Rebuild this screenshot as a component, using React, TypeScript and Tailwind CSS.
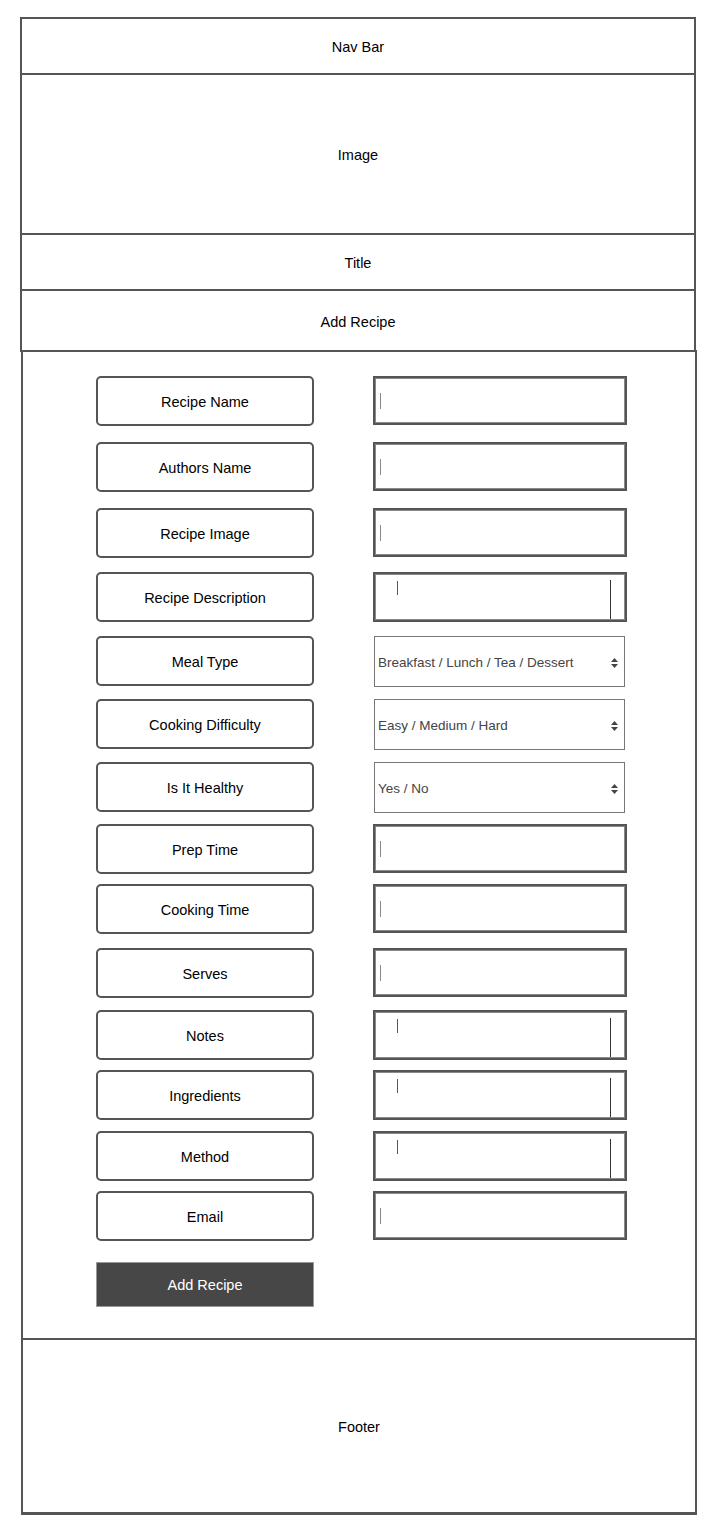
type Field = {
  label: string;
  kind: "input" | "area" | "select";
  gap: string;
  placeholder?: string;
};

const FIELDS: Field[] = [
  { label: "Recipe Name", kind: "input", gap: "mt-0" },
  { label: "Authors Name", kind: "input", gap: "mt-[16px]" },
  { label: "Recipe Image", kind: "input", gap: "mt-[16px]" },
  { label: "Recipe Description", kind: "area", gap: "mt-[14px]" },
  { label: "Meal Type", kind: "select", gap: "mt-[14px]", placeholder: "Breakfast / Lunch / Tea / Dessert" },
  { label: "Cooking Difficulty", kind: "select", gap: "mt-[12px]", placeholder: "Easy / Medium / Hard" },
  { label: "Is It Healthy", kind: "select", gap: "mt-[12px]", placeholder: "Yes / No" },
  { label: "Prep Time", kind: "input", gap: "mt-[11px]" },
  { label: "Cooking Time", kind: "input", gap: "mt-[10px]" },
  { label: "Serves", kind: "input", gap: "mt-[14px]" },
  { label: "Notes", kind: "area", gap: "mt-[12px]" },
  { label: "Ingredients", kind: "area", gap: "mt-[10px]" },
  { label: "Method", kind: "area", gap: "mt-[11px]" },
  { label: "Email", kind: "input", gap: "mt-[10px]" },
];

function Block({ label, cls }: { label: string; cls: string }) {
  return (
    <div className={`flex items-center justify-center border-2 border-[#555] pt-[4px] text-[14.5px] text-black ${cls}`}>
      {label}
    </div>
  );
}

function Control({ f }: { f: Field }) {
  if (f.kind === "select") {
    return (
      <div className="ml-[60px] flex h-[51px] w-[251px] items-center justify-between border border-[#777] pl-[3px] pr-[5px] pt-[3px] text-[13.5px] text-[#444]">
        <span>{f.placeholder}</span>
        <svg width="9" height="12" viewBox="0 0 9 12">
          <path d="M4.5 1 L8 5 L1 5 Z" fill="#444" />
          <path d="M4.5 11 L8 7 L1 7 Z" fill="#444" />
        </svg>
      </div>
    );
  }
  if (f.kind === "area") {
    return (
      <div className="relative ml-[59px] h-[50px] w-[254px] border-2 border-[#555] shadow-[inset_0_0_0_1px_#8a8a8a]">
        <span className="absolute left-[22px] top-[7px] h-[14px] w-px bg-[#555]" />
        <span className="absolute right-[14px] top-[6px] h-[39px] w-px bg-[#333]" />
      </div>
    );
  }
  return (
    <div className="ml-[59px] flex h-[49px] w-[254px] items-center border-2 border-[#555] pl-[5px] shadow-[inset_0_0_0_1px_#8a8a8a]">
      <span className="h-[16px] w-px bg-[#888]" />
    </div>
  );
}

export default function App() {
  return (
    <div className="min-h-[1523px] bg-white pt-[17px] font-['Liberation_Sans',Arial,sans-serif]">
      <div className="ml-[20px] w-[677px]">
        <Block label="Nav Bar" cls="h-[58px] w-[676px]" />
        <Block label="Image" cls="-mt-[2px] h-[162px] w-[676px]" />
        <Block label="Title" cls="-mt-[2px] h-[58px] w-[676px]" />
        <Block label="Add Recipe" cls="-mt-[2px] h-[63px] w-[676px]" />

        <div className="-mt-[2px] ml-[1px] w-[676px] border-2 border-[#555] pb-[31px] pl-[73px] pt-[24px]">
          {FIELDS.map((f) => (
            <div key={f.label} className={`flex items-start ${f.gap}`}>
              <Block label={f.label} cls="h-[50px] w-[218px] shrink-0 rounded-[5px]" />
              <Control f={f} />
            </div>
          ))}
          <button className="mt-[21px] flex h-[45px] w-[218px] items-center justify-center border border-[#999] bg-[#474747] pt-[2px] text-[14.5px] text-white">
            Add Recipe
          </button>
        </div>

        <div className="-mt-[2px] ml-[1px] flex h-[177px] w-[676px] items-center justify-center border-2 border-b-[3px] border-[#555] pt-[4px] text-[14.5px] text-black">
          Footer
        </div>
      </div>
    </div>
  );
}
